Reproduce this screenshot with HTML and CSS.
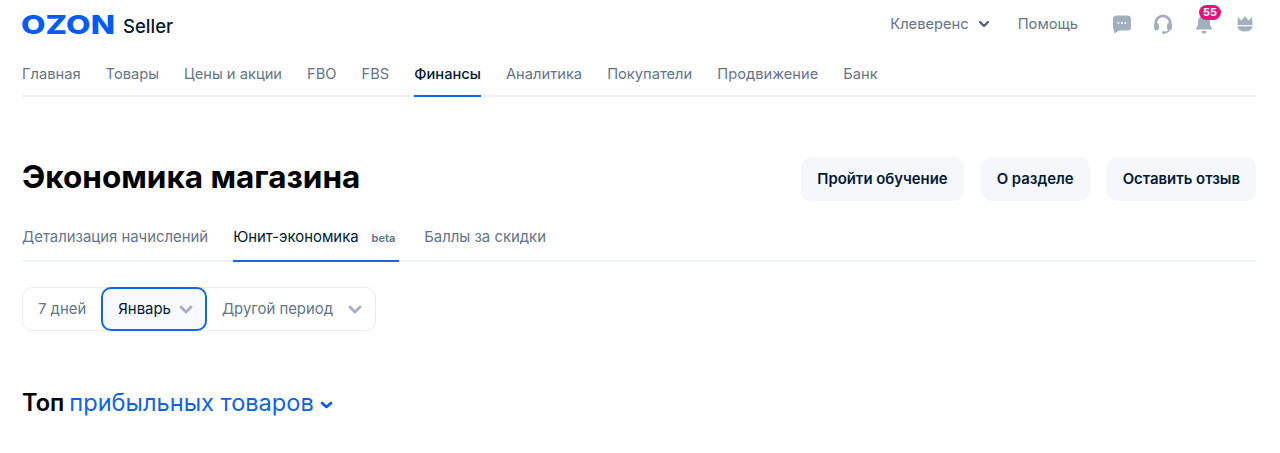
FILE: index.html
```html
<!DOCTYPE html>
<html lang="ru">
<head>
<meta charset="utf-8">
<title>Экономика магазина</title>
<link rel="stylesheet" href="styles.css">
</head>
<body>
<header class="top">
  <div class="brand">
    <svg class="logo" width="94" height="32" viewBox="0 0 94 32"><text x="-1" y="26" textLength="94" lengthAdjust="spacingAndGlyphs" class="logo-text">OZON</text></svg>
    <span class="seller">Seller</span>
  </div>
  <div class="tools">
    <span class="account">Клеверенс
      <svg class="chev" width="12" height="8" viewBox="0 0 12 8"><path d="M2 2l4 4 4-4" fill="none" stroke="#55677a" stroke-width="2.4" stroke-linecap="round" stroke-linejoin="round"/></svg>
    </span>
    <span class="help">Помощь</span>
    <div class="icons">
      <svg width="20" height="20" viewBox="0 0 20 20"><path d="M4.5 1.5h11A3.500 3.500 0 0 1 19 5v8a3.500 3.500 0 0 1-3.500 3.500H7L3.200 19c-.5.300-1.200 0-1.200-.7v-2.500A3.500 3.500 0 0 1 1 13V5a3.500 3.500 0 0 1 3.500-3.500z" fill="#a2b0be"/><circle cx="6.500" cy="9" r="1.100" fill="#fff"/><circle cx="10" cy="9" r="1.100" fill="#fff"/><circle cx="13.500" cy="9" r="1.100" fill="#fff"/></svg>
      <svg width="20" height="20" viewBox="0 0 20 20"><path d="M2.800 12V9a7.200 7.200 0 0 1 14.400 0v3" fill="none" stroke="#a2b0be" stroke-width="2.800"/><rect x="1" y="9" width="5" height="7.500" rx="2.400" fill="#a2b0be"/><rect x="14" y="9" width="5" height="7.500" rx="2.400" fill="#a2b0be"/><path d="M16 15c0 2.500-2 3.500-5 3.500" fill="none" stroke="#a2b0be" stroke-width="1.800"/><circle cx="10.500" cy="18.500" r="1.500" fill="#a2b0be"/></svg>
      <span class="bell">
        <svg width="20" height="20" viewBox="0 0 20 20"><path d="M10 1.500a6 6 0 0 1 6 6V11l2 3.500c.3.600 0 1-.6 1H2.600c-.6 0-.9-.4-.6-1L4 11V7.500a6 6 0 0 1 6-6z" fill="#a2b0be"/><path d="M7.500 17h5a2.500 2.500 0 0 1-5 0z" fill="#a2b0be"/></svg>
        <span class="badge">55</span>
      </span>
      <svg width="20" height="20" viewBox="0 0 20 20"><path d="M3 3l3.500 3.500L10 2l3.500 4.500L17 3l.6 8H2.400z" fill="#a2b0be"/><path d="M2.500 12.300h15c-.3 3.500-3.500 5.200-7.500 5.200s-7.200-1.700-7.500-5.200z" fill="#a2b0be"/></svg>
    </div>
  </div>
</header>
<nav class="nav">
  <a>Главная</a><a>Товары</a><a>Цены и акции</a><a>FBO</a><a>FBS</a><a class="active">Финансы</a><a>Аналитика</a><a>Покупатели</a><a>Продвижение</a><a>Банк</a>
</nav>
<section class="head">
  <h1>Экономика магазина</h1>
  <div class="actions">
    <button class="btn">Пройти обучение</button>
    <button class="btn">О разделе</button>
    <button class="btn">Оставить отзыв</button>
  </div>
</section>
<div class="tabs">
  <a>Детализация начислений</a>
  <a class="active">Юнит-экономика<span class="beta">beta</span></a>
  <a>Баллы за скидки</a>
</div>
<div class="period">
  <div class="seg">7 дней</div>
  <div class="seg selected">Январь
    <svg width="14" height="9" viewBox="0 0 14 9"><path d="M2 2l5 5 5-5" fill="none" stroke="#a2b0be" stroke-width="2.800" stroke-linecap="round" stroke-linejoin="round"/></svg>
  </div>
  <div class="seg wide">Другой период
    <svg width="14" height="9" viewBox="0 0 14 9"><path d="M2 2l5 5 5-5" fill="none" stroke="#a2b0be" stroke-width="2.800" stroke-linecap="round" stroke-linejoin="round"/></svg>
  </div>
</div>
<h2 class="top-title">Топ <span class="link">прибыльных товаров<svg class="link-chev" width="13" height="8" viewBox="0 0 13 8"><path d="M2 2l4.500 4L11 2" fill="none" stroke="#005bff" stroke-width="2.600" stroke-linecap="round" stroke-linejoin="round"/></svg></span></h2>
</body>
</html>
```
FILE: styles.css
```css
* { box-sizing: border-box; }
html, body { margin: 0; padding: 0; background: #fff; }
body { font-family: Inter, "Liberation Sans", sans-serif; color: #001a34; height: 453px; overflow: hidden; padding: 0 24px 0 22px; }
.top { display: flex; justify-content: space-between; align-items: center; height: 50px; }
.brand { display: flex; align-items: center; gap: 7px; }
.logo { display: block; margin-top: -3px; overflow: visible; }
.logo-text { font-family: Inter, sans-serif; font-weight: 800; font-size: 26px; fill: #005bff; }
.seller { font-size: 18.5px; font-weight: 500; color: #001a34; margin-top: 2px; }
.tools { display: flex; align-items: center; margin-top: -2px; }
.account, .help { font-size: 14.7px; color: #647587; }
.account { display: flex; align-items: center; gap: 9px; }
.help { margin-left: 28px; }
.icons { display: flex; align-items: center; gap: 21px; margin-left: 34px; margin-right: 1px; }
.bell { position: relative; display: block; height: 20px; }
.badge { position: absolute; left: 5px; top: -9px; background: #e8107c; color: #fff; border-radius: 8px; font-size: 11px; font-weight: 700; line-height: 15px; padding: 0 4px; }
.nav { display: flex; gap: 25px; height: 47px; border-bottom: 2px solid #eef1f5; }
.nav a { font-size: 14.7px; color: #647587; line-height: 48px; height: 47px; }
.nav a.active { color: #001a34; font-weight: 500; border-bottom: 2px solid #1566e0; }
.head { display: flex; justify-content: space-between; align-items: center; margin-top: 60px; height: 44px; }
h1 { margin: -5px 0 0; font-size: 31.5px; font-weight: 700; color: #000; }
.actions { display: flex; gap: 17px; }
.btn { height: 44px; border: 0; border-radius: 10px; background: #f5f7fb; font: 600 14.9px Inter, sans-serif; color: #001a34; padding: 0 16px; }
.tabs { display: flex; gap: 25px; margin-top: 14px; height: 47px; border-bottom: 2px solid #eef1f5; }
.tabs a { font-size: 14.9px; color: #647587; line-height: 45px; height: 47px; }
.tabs a.active { color: #001a34; border-bottom: 2px solid #1566e0; }
.beta { display: inline-block; font-size: 11px; font-weight: 600; color: #647587; background: #f5f7fb; border-radius: 5px; padding: 0 4px; margin-left: 9px; line-height: 17px; }
.period { display: inline-flex; height: 44px; margin-top: 25px; border: 1px solid #e9edf2; border-radius: 10px; }
.seg { display: flex; align-items: center; gap: 8px; font-size: 14.9px; color: #647587; padding: 0 15px; margin: -1px 0; }
.seg.selected { color: #001a34; background: #f7f9fc; border: 2px solid #1566e0; border-radius: 10px; padding: 0 12px 0 15px; }
.seg.wide { gap: 15px; padding-right: 13px; }
.top-title { margin: 57px 0 0; font-size: 23.6px; font-weight: 600; color: #000; }
.link { color: #0f62e8; font-weight: 400; margin-left: -1px; }
.link-chev { margin-left: 6px; position: relative; top: -2px; }
```
